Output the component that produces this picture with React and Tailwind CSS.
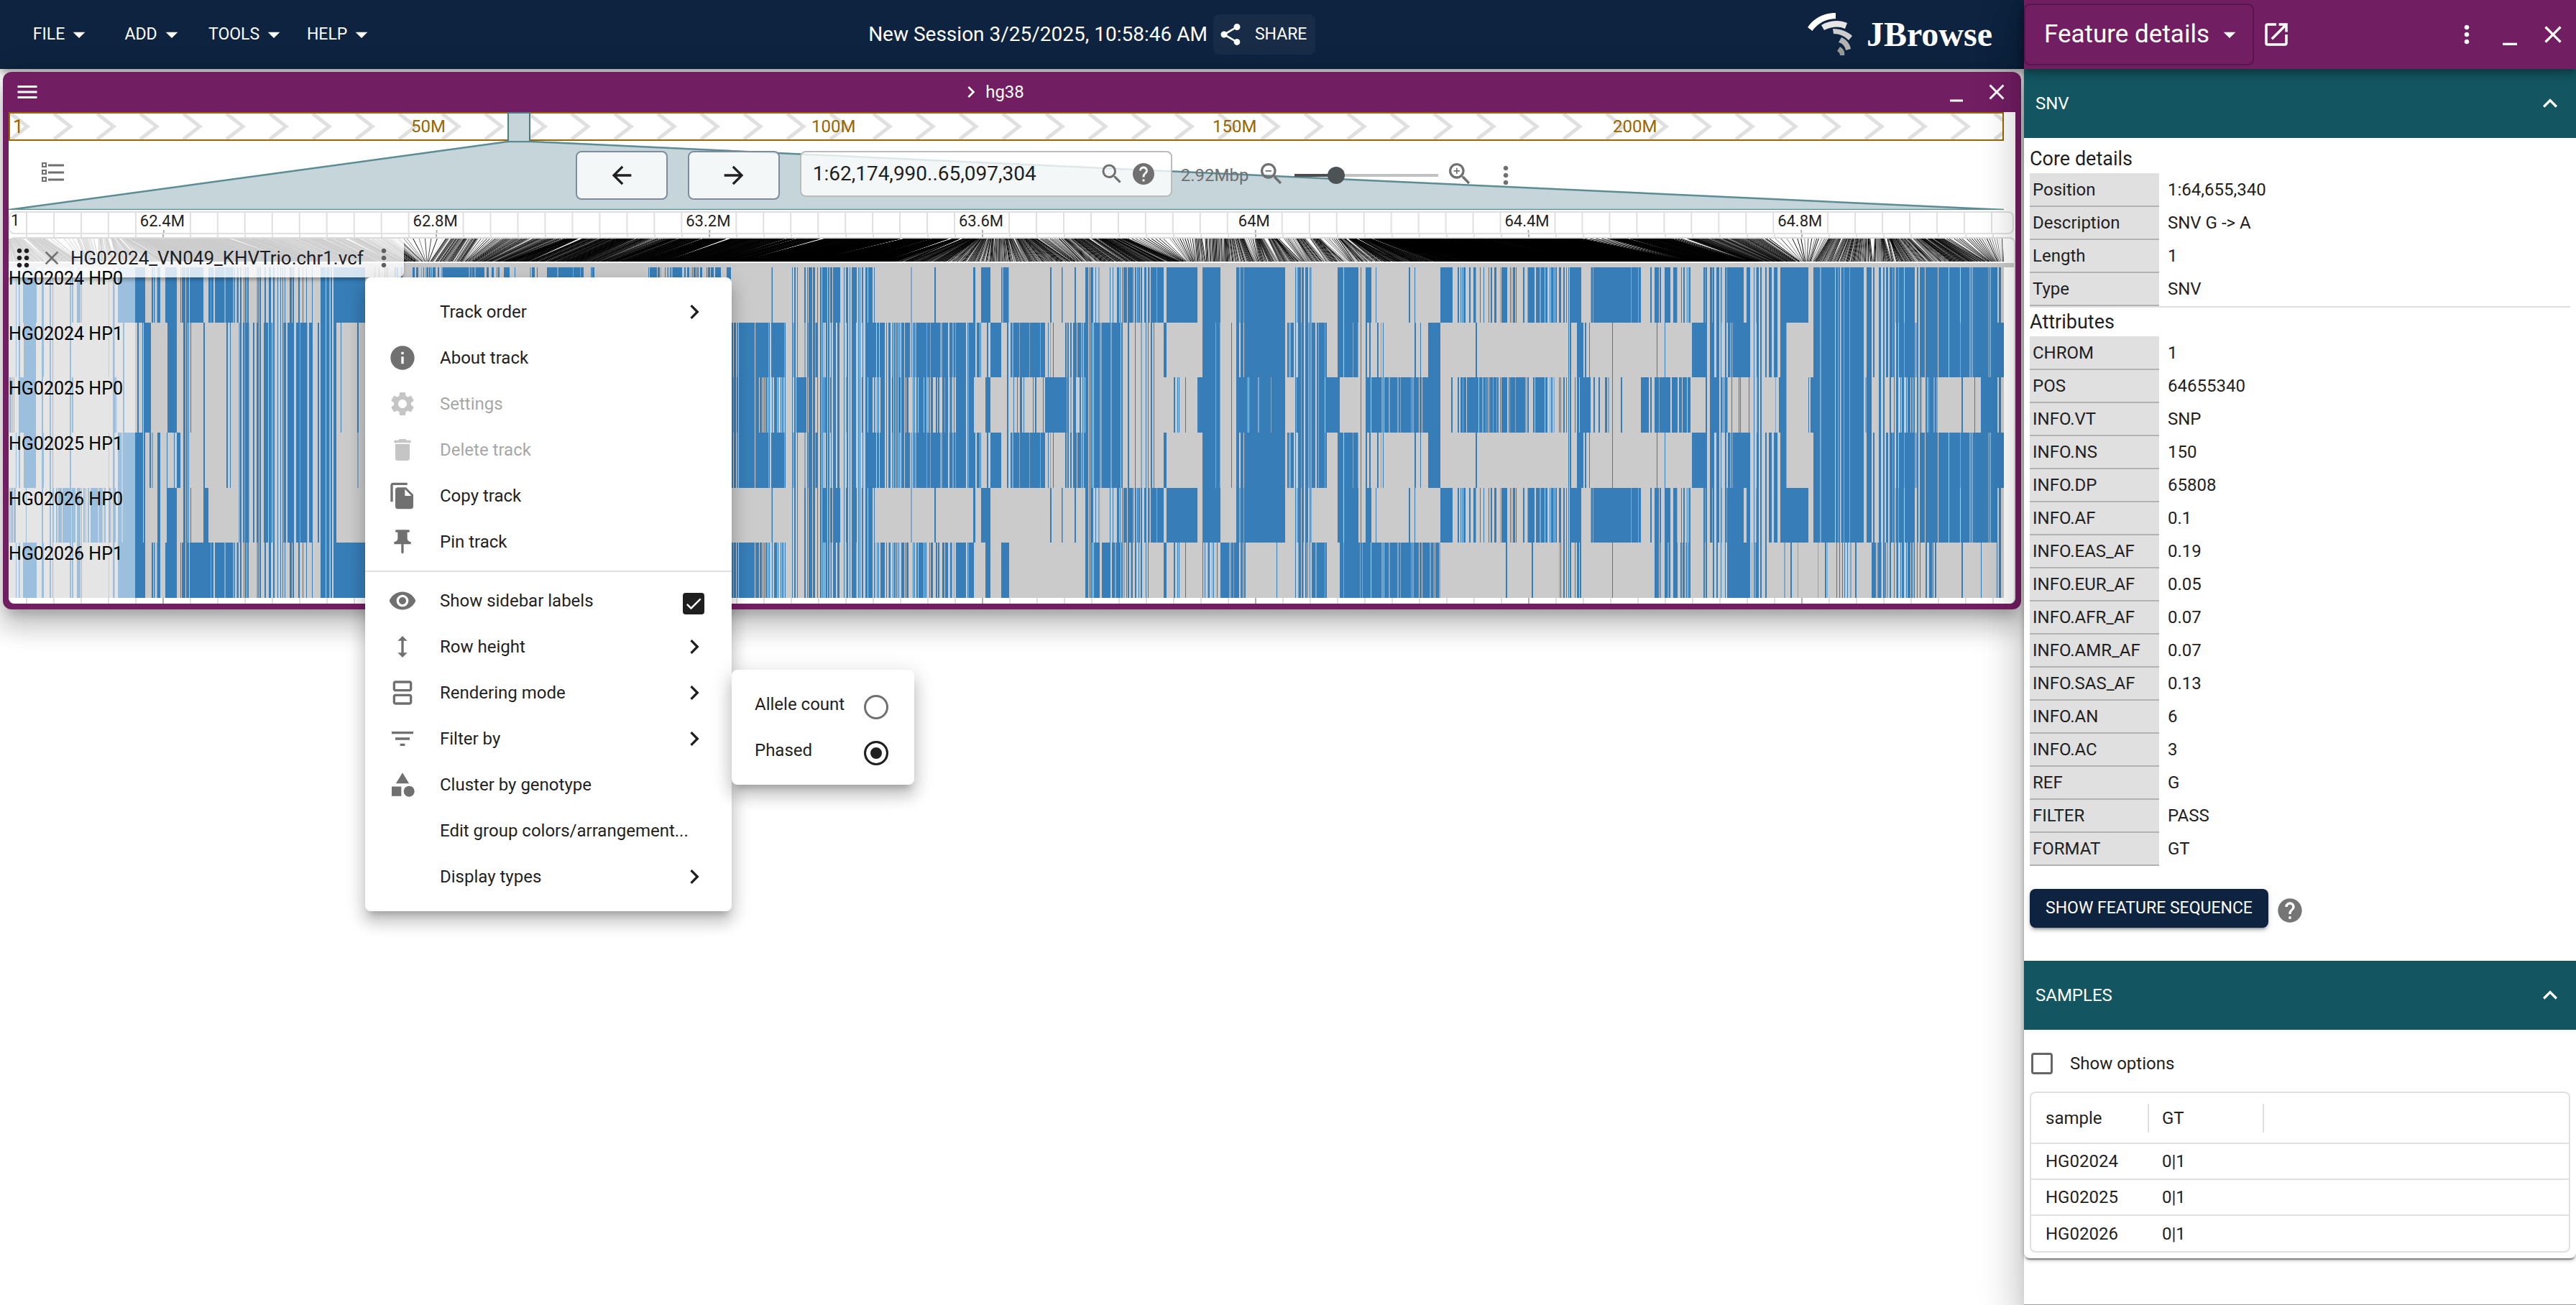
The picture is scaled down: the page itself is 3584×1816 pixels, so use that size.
import React from "react";
import {
  MdInfo, MdSettings, MdDelete, MdFileCopy, MdPushPin, MdVisibility, MdHeight, MdOutlineSplitscreen,
  MdFilterList, MdCategory, MdChevronRight, MdArrowBack, MdArrowForward, MdSearch, MdHelp, MdZoomOut,
  MdZoomIn, MdMoreVert, MdMinimize, MdClose, MdMenu, MdShare, MdArrowDropDown, MdOpenInNew,
  MdExpandLess, MdDragIndicator, MdCheck,
} from "react-icons/md";

/* ---------- genome data ---------- */

const ORIGIN = 12;
const SPAN = 2776;
const pct = (x) => ((x - ORIGIN) / SPAN) * 100 + "%";

// Each run is [end position, share of alternate alleles]
const LEFT_A = [[20,0],[27,.5],[32,.3],[51,1],[63,.5],[72,.3],[107,.13],[115,.6],[147,.08],[164,.3],[202,.98],[209,0],[230,.6],[246,1],[251,0],[264,.6],[283,1]];
const LEFT_B = [[21,0],[33,.5],[50,1],[63,.5],[73,.3],[147,.06],[164,.3]];
const MID_B = [[367,.7],[372,1],[390,.5],[400,.65],[419,.85],[434,.93],[450,.5],[468,.6]];
const MID_A = [[332,.96],[367,.5],[400,.3],[446,.22],[468,.6],[508,.98]];
const STRIP = [[566,.3],[614,.5],[673,.97],[710,.4],[737,.05],[748,.6],[761,0],[812,.95],[822,.1],[826,.8],[900,.03],[917,.85],[928,.2],[943,.7],[1016,.6]];
const RIGHT_A1 = [[1072,0],[1075,.7],[1099,0],[1140,.45],[1169,.6],[1204,.5],[1220,.4],[1239,0],[1241,.9],[1266,0],[1268,.9],[1300,0],[1302,.9],[1354,0],[1356,.7],[1365,0],[1378,.97],[1393,0]];
const RIGHT_A2 = [[1461,0],[1463,.9],[1477,0],[1479,.9],[1495,0],[1497,.6],[1510,0],[1521,.8],[1561,.17],[1601,.65],[1619,.93],[1623,0],[1666,.99],[1674,.4],[1698,.99],[1719,0],[1733,.8],[1788,.98],[1802,.15],[1825,.88],[1861,0],[1890,.92],[1901,.4],[1908,1],[1914,0],[1916,.7],[1960,0],[1962,.7],[2004,.02],[2019,1],[2039,.6],[2088,.35],[2096,.9],[2127,.25],[2133,1],[2148,.4],[2167,.8],[2200,.65],[2213,0],[2283,.97],[2294,0],[2354,.5],[2370,0],[2403,.5],[2421,1],[2477,.55],[2515,.99],[2523,.2],[2603,.92],[2624,.3],[2645,.85],[2697,.75],[2778,.96],[2788,.5]];
const RIGHT_B = [[1054,.95],[1092,.87],[1105,.5],[1124,.4],[1143,.75],[1204,.35],[1255,.72],[1303,.9],[1365,.93],[1378,.3],[1393,1],[1405,.15],[1453,.97],[1481,.1],[1510,.6],[1523,.5],[1562,.97],[1601,.3],[1619,.1],[1623,1],[1650,0],[1666,.2],[1674,.6],[1698,.95],[1720,.1],[1733,.7],[1788,.98],[1808,.7],[1846,.94],[1861,0],[1890,.87],[1908,.3],[1987,.05],[2004,1],[2053,0],[2055,.8],[2150,0],[2167,.3],[2194,.1],[2203,.9],[2213,.2],[2353,.02],[2368,1],[2385,.65],[2404,.4],[2433,.92],[2477,.5],[2486,.9],[2516,0],[2523,.2],[2603,.92],[2624,.35],[2697,.82],[2788,.97]];
const ROWS = [
  ["HG02024 HP0", [...LEFT_A, [290,0], ...MID_A, ...STRIP, ...RIGHT_A1, [1404,.97], ...RIGHT_A2]],
  ["HG02024 HP1", [...LEFT_B, [197,.07],[202,.5],[209,1],[229,0],[233,.3],[245,1],[250,0],[270,.4],[332,.06], ...MID_B, [1018,.04], ...RIGHT_B]],
  ["HG02025 HP0", [[16,1],[27,.3],[50,1],[73,.3],[157,.08],[164,.9],[197,.07],[202,.5],[209,1],[229,0],[233,.3],[245,1],[250,0],[270,.4],[332,.05], ...MID_B, [1018,.04],
    [1054,.97],[1108,.45],[1122,1],[1156,.5],[1226,.42],[1255,.75],[1332,.7],[1355,.92],[1370,.4],[1378,1],[1405,.05],[1453,.1],[1486,.94],[1510,.4],[1523,.5],[1562,.97],[1601,.3],[1666,.05],[1698,.93],[1720,.1],[1788,.96],[1802,.1],[1844,.93],[1864,1],[1888,0],[1901,.4],[1987,.93],[2004,1],[2019,0],[2033,.6],[2127,.85],[2133,0],[2167,.7],[2200,.4],[2213,1],[2239,.3],[2283,.07],[2294,1],[2303,.2],[2354,.8],[2373,0],[2404,.7],[2475,.2],[2486,.9],[2515,0],[2523,.4],[2603,.93],[2627,.25],[2697,.55],[2733,.15],[2756,.1],[2778,1],[2788,.5]]],
  ["HG02025 HP1", [...LEFT_B, [202,.97],[208,0],[233,.5],[245,.3],[250,1],[264,.4],[332,.06], ...MID_B, [1018,.02], ...RIGHT_B]],
  ["HG02026 HP0", [[21,.7],[52,.03],[72,.3],[104,.97],[128,.6],[147,.97],[164,.6],[202,.97],[212,0],[233,.5],[245,1],[250,0],[270,.4],[283,.2],[290,1],[332,0], ...MID_B, [1018,0], ...RIGHT_A1, [1404,0], ...RIGHT_A2]],
  ["HG02026 HP1", [...LEFT_A, ...MID_A, [1018,.5], [1054,.97],[1226,.45],[1332,.65],[1355,.95],[1370,.4],[1378,1],[1393,0],[1404,1],[1510,.02],[1523,.5],[1562,.92],[1601,.45],[1619,0],[1623,1],[1670,.05],[1698,.25],[1719,.97],[1733,.6],[1800,.03],[1825,.5],[1846,.97],[1863,0],[2004,.94],[2150,.02],[2203,.3],[2297,.03],[2324,.45],[2354,.6],[2370,0],[2403,.2],[2431,1],[2457,.6],[2603,.12],[2624,.8],[2697,.4],[2778,.05],[2788,.5]]],
];

function makeRandom(seed) {
  let s = seed;
  return () => {
    s = (s + 0x6d2b79f5) | 0;
    let t = Math.imul(s ^ (s >>> 15), 1 | s);
    t = (t + Math.imul(t ^ (t >>> 7), 61 | t)) ^ t;
    return ((t ^ (t >>> 14)) >>> 0) / 4294967296;
  };
}

// Variant columns are shared by every haplotype row
const COLUMNS = (() => {
  const rnd = makeRandom(7);
  const out = [];
  let x = ORIGIN + 1;
  while (x < 2788) {
    const w = rnd() < 0.7 ? 1 : 2;
    out.push([x, w, rnd()]);
    x += w;
  }
  return out;
})();

function stripes(runs) {
  let i = 0;
  let full = "";
  let half = "";
  for (const [x, w, n] of COLUMNS) {
    while (i < runs.length - 1 && x >= runs[i][0]) i++;
    const d = runs[i][1];
    const box = `M${x - ORIGIN} 0h${w}v10h-${w}z`;
    if (n < d * 0.9 || d >= 0.98) full += box;
    else if (n < d) half += box;
  }
  return { full, half };
}

// [matrix position, genome position]
const FAN = [[12,12],[40,16],[110,60],[120,110],[150,150],[300,200],[420,330],[560,500],[590,560],[598,616],[643,666],[650,690],[704,788],[722,795],[830,900],[840,925],[957,1048],[1100,1240],[1240,1330],[1380,1383],[1400,1398],[1490,1445],[1505,1475],[1640,1570],[1652,1625],[1664,1660],[1700,1698],[1745,1728],[1752,1745],[1810,1780],[1822,1805],[1875,1840],[1884,1862],[1960,1895],[2100,1960],[2350,2200],[2356,2240],[2430,2325],[2436,2345],[2504,2460],[2510,2500],[2516,2525],[2525,2545],[2620,2615],[2760,2705],[2772,2740],[2788,2787]];

const FAN_LINES = (() => {
  const rnd = makeRandom(23);
  const groups = { "#000": "", "#1c1c1c": "", "#4a4a4a": "", "#8a8a8a": "", "#d8d8d8": "" };
  const keys = Object.keys(groups);
  let i = 0;
  let clump = 0;
  for (let b = 12; b < 2788; b += 1.2) {
    while (i < FAN.length - 2 && b > FAN[i + 1][0]) i++;
    const [b0, t0] = FAN[i];
    const [b1, t1] = FAN[i + 1];
    if (rnd() < 0.08) clump = (rnd() - 0.5) * 7;
    const t = t0 + ((t1 - t0) * (b - b0)) / (b1 - b0) + clump;
    const lean = Math.abs(t - b);
    const r = rnd();
    const shade = lean > 85 ? (r < .85 ? 0 : r < .97 ? 1 : 2) : lean > 40 ? (r < .4 ? 0 : r < .7 ? 1 : r < .9 ? 2 : r < .98 ? 3 : 4) : (r < .15 ? 0 : r < .45 ? 1 : r < .75 ? 2 : r < .95 ? 3 : 4);
    groups[keys[shade]] += `M${(b - ORIGIN).toFixed(1)} 32L${(t - ORIGIN).toFixed(1)} 0`;
  }
  return groups;
})();

const MINOR = Array.from({ length: 73 }, (_, k) => 36 + 38 * k).filter((x) => (x - 226) % 380 !== 0);
const MAJOR = [["62.4M", 226], ["62.8M", 606], ["63.2M", 986], ["63.6M", 1366], ["64M", 1746], ["64.4M", 2126], ["64.8M", 2506]];
const OVERVIEW = [["50M", 572], ["100M", 1129], ["150M", 1687], ["200M", 2244]];

/* ---------- small parts ---------- */

function TopMenu({ label }) {
  return (
    <button className="flex h-16 min-w-32 items-center justify-center px-2.5 text-[23px] text-white">
      {label}
      <MdArrowDropDown className="size-10" />
    </button>
  );
}

function Logo() {
  return (
    <div className="flex items-center gap-5 pl-3">
      <svg viewBox="0 0 62 60" className="h-[60px] w-[62px]" aria-hidden="true">
        <path d="M0 20 C9 7 22 0 39 0 L39 8 C25 8 14 15 6.500 25 Z" fill="#fff" />
        <path d="M19 17 C30 10 44 9 55 14 L52 22 C43 18 33 19 23 24 Z" fill="#e6e6e6" />
        <path d="M35 22 C46 22 56 26 62 32 L57 38 C51 32 44 29 36 29 Z" fill="#cccccc" />
        <path d="M47 34 C54 37 59 43 60 50 L53 52 C52 46 48 42 43 41 Z" fill="#b3b3b3" />
        <path d="M45 47 C50 50 52 54 51 59 L45 59 C45 56 43 54 41 53 Z" fill="#999999" />
      </svg>
      <span className="font-[Liberation_Serif,serif] text-5xl font-bold text-white">JBrowse</span>
    </div>
  );
}

function TrackMenuItem({ icon: Icon, label, disabled, arrow }) {
  return (
    <li>
      <button disabled={disabled} className={disabled ? "flex h-16 w-full items-center px-8 text-left opacity-40" : "flex h-16 w-full items-center px-8 text-left"}>
        <span className="flex w-[72px] shrink-0">{Icon && <Icon className="size-10 text-[#707070]" />}</span>
        <span className="flex-1 whitespace-nowrap">{label}</span>
        {arrow && <MdChevronRight className="size-10" />}
      </button>
    </li>
  );
}

function Radio({ id, label, checked }) {
  return (
    <label htmlFor={id} className="flex h-16 items-center justify-between pr-9 pl-8">
      {label}
      <input id={id} type="radio" name="mode" defaultChecked={checked} className="mt-2 size-[34px] appearance-none rounded-full border-[3px] border-[#707070] checked:border-[#1f1f1f] checked:bg-[#1f1f1f] checked:shadow-[inset_0_0_0_6px_white]" />
    </label>
  );
}

function SectionHeader({ title }) {
  return (
    <button className="flex h-24 w-full items-center justify-between bg-[#135560] pr-4 pl-4 text-[24px] text-white">
      {title}
      <MdExpandLess className="size-10" />
    </button>
  );
}

function Fields({ rows }) {
  return (
    <table className="w-full text-left text-2xl">
      <tbody>
        {rows.map(([k, v]) => (
          <tr key={k} className="h-[46px]">
            <th scope="row" className="w-[180px] border-b-2 border-[#b2b2b2] bg-[#e0e0e0] p-0 pl-1 font-normal">{k}</th>
            <td className="p-0 pl-3">{v}</td>
          </tr>
        ))}
      </tbody>
    </table>
  );
}

const CORE = [["Position", "1:64,655,340"], ["Description", "SNV G -> A"], ["Length", "1"], ["Type", "SNV"]];
const ATTRS = [["CHROM", "1"], ["POS", "64655340"], ["INFO.VT", "SNP"], ["INFO.NS", "150"], ["INFO.DP", "65808"], ["INFO.AF", "0.1"], ["INFO.EAS_AF", "0.19"], ["INFO.EUR_AF", "0.05"], ["INFO.AFR_AF", "0.07"], ["INFO.AMR_AF", "0.07"], ["INFO.SAS_AF", "0.13"], ["INFO.AN", "6"], ["INFO.AC", "3"], ["REF", "G"], ["FILTER", "PASS"], ["FORMAT", "GT"]];

/* ---------- view panels ---------- */

function Overview() {
  return (
    <svg className="block h-10 w-full" aria-label="Chromosome overview">
      <defs>
        <pattern id="chevrons" x="2" width="60" height="40" patternUnits="userSpaceOnUse">
          <path d="M1 2 L24 20 L1 38" fill="none" stroke="#e0e0e0" strokeWidth="5" />
        </pattern>
      </defs>
      <rect width="100%" height="40" fill="#fff" />
      <rect width="100%" height="40" fill="url(#chevrons)" />
      <rect width="100%" height="2" fill="#996600" />
      <rect y="38" width="100%" height="2" fill="#996600" />
      <rect width="2" height="40" fill="#996600" />
      <rect x="100%" width="2" height="40" fill="#996600" transform="translate(-2 0)" />
      <rect x={pct(707)} width="1.1%" height="40" fill="#c6d5d9" />
      <rect x={pct(706)} width="2" height="40" fill="#4c7d85" />
      <rect x={pct(736)} width="2" height="40" fill="#4c7d85" />
      <rect x={pct(707)} width="1.1%" height="2" fill="#4c7d85" />
      <text x="6" y="29" fontSize="26" fill="#996600">1</text>
      {OVERVIEW.map(([t, x]) => (
        <text key={t} x={pct(x)} y="28" fontSize="24" fill="#996600">{t}</text>
      ))}
    </svg>
  );
}

function Toolbar() {
  return (
    <div className="relative h-24">
      <svg className="absolute inset-y-0 left-0 h-full w-[calc(100%-16px)]" viewBox="0 0 2776 96" preserveAspectRatio="none" aria-hidden="true">
        <path d="M695 0 L726 0 L2776 96 L0 96 Z" fill="#c6d5d9" />
        <path d="M0 96 L695 1 L726 1 L2776 96 Z" fill="none" stroke="#5c8d94" strokeWidth="2.5" />
      </svg>
      <div className="relative flex h-full items-center text-[#707070]">
        <button aria-label="Open track selector" className="flex w-[104px] justify-center pb-2 pl-5">
          <svg viewBox="0 0 32 28" className="h-7 w-8" fill="none" stroke="currentColor">
            {[3, 13, 23].map((y) => (
              <g key={y}>
                <rect x="1" y={y - 2} width="5" height="5" strokeWidth="2" />
                <path d={`M9 ${y + 1}H31`} strokeWidth="3" />
              </g>
            ))}
          </svg>
        </button>
        <div className="flex-1" />
        <button aria-label="Pan left" className="flex h-[68px] w-32 items-center justify-center rounded-lg border-2 border-[#7f8ca0] bg-white/80 text-[#1f1f1f]"><MdArrowBack className="size-10" /></button>
        <button aria-label="Pan right" className="ml-7 flex h-[68px] w-32 items-center justify-center rounded-lg border-2 border-[#7f8ca0] bg-white/80 text-[#1f1f1f]"><MdArrowForward className="size-10" /></button>
        <div className="mb-1 ml-7 flex h-16 w-[518px] items-center rounded-lg border-2 border-[#bbbbbb] bg-white/80 pr-5 pl-4">
          <input aria-label="Location" defaultValue="1:62,174,990..65,097,304" className="min-w-0 flex-1 bg-transparent text-[28px] text-[#1f1f1f]" />
          <button aria-label="Search"><MdSearch className="size-9" /></button>
          <button aria-label="Help" className="ml-2"><MdHelp className="size-9" /></button>
        </div>
        <span className="ml-3 text-2xl">2.92Mbp</span>
        <button aria-label="Zoom out" className="mb-1 ml-3"><MdZoomOut className="size-10" /></button>
        <input aria-label="Zoom" type="range" min="0" max="100" defaultValue="26" className="ml-3 h-6 w-[200px] appearance-none bg-[linear-gradient(to_right,#4d4d4d_28%,#c2c2c2_28%)] bg-[length:100%_4px] bg-center bg-no-repeat [&::-webkit-slider-thumb]:size-6 [&::-webkit-slider-thumb]:appearance-none [&::-webkit-slider-thumb]:rounded-full [&::-webkit-slider-thumb]:bg-[#4d5254]" />
        <button aria-label="Zoom in" className="mb-1 ml-2.5"><MdZoomIn className="size-10" /></button>
        <button aria-label="View menu" className="mr-1 ml-6"><MdMoreVert className="size-10" /></button>
        <div className="flex-1" />
      </div>
    </div>
  );
}

function Ruler() {
  return (
    <div className="mr-0.5 mt-0.5 h-8 overflow-hidden rounded-lg border-2 border-[#e0e0e0] bg-white">
      <svg className="-my-0.5 block h-8 w-[calc(100%-12px)] overflow-visible" aria-label="Scale">
        {MINOR.map((x) => <rect key={x} x={pct(x - 2)} width="2" height="32" fill="#e0e0e0" />)}
        {MAJOR.map(([t, x]) => (
          <g key={t}>
            <rect x={pct(x - 1)} y="26" width="2" height="6" fill="#b0b0b0" />
            <text x={pct(x - 2)} y="21" fontSize="22" textAnchor="middle" fill="#1f1f1f">{t}</text>
          </g>
        ))}
        <text x="1" y="20" fontSize="22" fill="#1f1f1f">1</text>
      </svg>
    </div>
  );
}

function Gridlines({ className }) {
  return (
    <svg className={className} aria-hidden="true">
      {MINOR.map((x) => <rect key={x} x={pct(x)} width="2" height="100%" fill="#e0e0e0" />)}
      {MAJOR.map(([t, x]) => <rect key={t} x={pct(x)} width="2" height="100%" fill="#b0b0b0" />)}
    </svg>
  );
}

function Track() {
  return (
    <div className="relative">
      <Gridlines className="block h-1 w-[calc(100%-16px)]" />
      <div className="relative rounded-lg border-2 border-b-0 border-l-0 border-[#dcdcdc] bg-white">
        <svg className="block h-8 w-[calc(100%-14px)]" viewBox="0 0 2776 32" preserveAspectRatio="none" aria-label="Variant positions">
          {Object.entries(FAN_LINES).reverse().map(([c, d]) => <path key={c} d={d} stroke={c} strokeWidth="1" fill="none" />)}
        </svg>
        <div className="mt-0.5 h-1.5 bg-[#c9c9c9]" />
        <div className="relative grid h-[460px] w-[calc(100%-14px)] grid-rows-6">
          {ROWS.map(([name, runs]) => {
            const { full, half } = stripes(runs);
            return (
              <svg key={name} className="block h-full min-h-0 w-full bg-[#cbcbcb]" viewBox="0 0 2776 10" preserveAspectRatio="none" aria-label={name} shapeRendering="crispEdges">
                <path d={half} fill="#7fa7c9" />
                <path d={full} fill="#377eb8" />
              </svg>
            );
          })}
          <div className="absolute inset-y-0 left-0 w-44 bg-white/50" />
        </div>
        <Gridlines className="block h-2 w-[calc(100%-14px)]" />
        <div className="absolute top-0 left-0 flex h-[54px] w-[550px] items-center rounded-br-lg bg-white/80 shadow-[0_4px_4px_rgba(0,0,0,0.25)]">
          <MdDragIndicator className="size-10 text-[#1f1f1f]" />
          <button aria-label="Close track" className="ml-1"><MdClose className="size-8 text-[#707070]" /></button>
          <span className="ml-2.5 text-[26px]">HG02024_VN049_KHVTrio.chr1.vcf</span>
          <button aria-label="Track menu" className="ml-2"><MdMoreVert className="size-10 text-[#606060]" /></button>
        </div>
        <div className="absolute top-10 left-0 grid h-[460px] grid-rows-6 text-[25px] text-black">
          {ROWS.map(([name]) => <div key={name} className="leading-8">{name}</div>)}
        </div>
      </div>
    </div>
  );
}

function TrackMenu() {
  return (
    <ul className="absolute top-[386px] left-[508px] w-[510px] rounded-lg bg-white py-4 text-2xl shadow-[0_10px_10px_-6px_rgba(0,0,0,0.2),0_16px_20px_2px_rgba(0,0,0,0.14),0_6px_28px_4px_rgba(0,0,0,0.12)]">
      <TrackMenuItem label="Track order" arrow />
      <TrackMenuItem icon={MdInfo} label="About track" />
      <TrackMenuItem icon={MdSettings} label="Settings" disabled />
      <TrackMenuItem icon={MdDelete} label="Delete track" disabled />
      <TrackMenuItem icon={MdFileCopy} label="Copy track" />
      <TrackMenuItem icon={MdPushPin} label="Pin track" />
      <li className="my-2 h-0.5 bg-[#e0e0e0]" />
      <li>
        <label htmlFor="sidebar" className="flex h-16 items-center px-8">
          <span className="flex w-[72px]"><MdVisibility className="size-10 text-[#707070]" /></span>
          <span className="flex-1">Show sidebar labels</span>
          <span className="mt-2 mr-1.5 grid size-[30px] place-items-center">
            <input id="sidebar" type="checkbox" defaultChecked className="col-start-1 row-start-1 size-[30px] appearance-none rounded border-2 border-[#1f1f1f] checked:bg-[#1f1f1f]" />
            <MdCheck className="pointer-events-none col-start-1 row-start-1 size-7 text-white" />
          </span>
        </label>
      </li>
      <TrackMenuItem icon={MdHeight} label="Row height" arrow />
      <TrackMenuItem icon={MdOutlineSplitscreen} label="Rendering mode" arrow />
      <TrackMenuItem icon={MdFilterList} label="Filter by" arrow />
      <TrackMenuItem icon={MdCategory} label="Cluster by genotype" />
      <TrackMenuItem label="Edit group colors/arrangement..." />
      <TrackMenuItem label="Display types" arrow />
    </ul>
  );
}

function Drawer() {
  return (
    <aside className="relative flex w-[768px] shrink-0 flex-col border-b border-[#a0a0a0] bg-white shadow-[0_16px_20px_-10px_rgba(0,0,0,0.2),0_32px_48px_4px_rgba(0,0,0,0.14),0_12px_60px_10px_rgba(0,0,0,0.12)]">
      <header className="relative flex h-24 items-center bg-[#721e63] pr-3 text-white shadow-[0_4px_8px_-2px_rgba(0,0,0,0.2),0_8px_10px_0_rgba(0,0,0,0.14),0_2px_20px_0_rgba(0,0,0,0.12)]">
        <button className="flex h-[86px] w-80 items-center justify-between rounded-lg border-2 border-[#58174c] pr-3 pl-[26px] text-[35px]">
          Feature details
          <MdArrowDropDown className="size-10" />
        </button>
        <button aria-label="Open in dialog" className="ml-2.5"><MdOpenInNew className="size-[42px]" /></button>
        <div className="flex-1" />
        <button aria-label="Drawer menu" className="mr-5"><MdMoreVert className="size-10" /></button>
        <button aria-label="Minimize drawer" className="mr-5"><MdMinimize className="size-10" /></button>
        <button aria-label="Close drawer"><MdClose className="size-10" /></button>
      </header>
      <div className="rounded-b-lg shadow-[0_4px_2px_-2px_rgba(0,0,0,0.4),0_2px_6px_rgba(0,0,0,0.3)]">
        <SectionHeader title="SNV" />
        <div className="px-2 pt-2 pb-[46px]">
          <h2 className="h-[41px] text-[27px] leading-[42px]">Core details</h2>
          <Fields rows={CORE} />
          <hr className="h-0.5 border-0 bg-[#e0e0e0]" />
          <h2 className="h-10 text-[27px] leading-10">Attributes</h2>
          <Fields rows={ATTRS} />
          <div className="mt-8 flex items-center">
            <button className="h-[54px] w-[332px] rounded-lg bg-[#0d233f] text-[23px] text-white shadow-[0_6px_2px_-4px_rgba(0,0,0,0.2),0_4px_4px_rgba(0,0,0,0.14),0_2px_10px_rgba(0,0,0,0.12)]">SHOW FEATURE SEQUENCE</button>
            <button aria-label="Sequence help" className="mt-1.5 ml-2.5"><MdHelp className="size-10 text-[#757575]" /></button>
          </div>
        </div>
        <SectionHeader title="SAMPLES" />
        <div className="p-2">
          <label htmlFor="options" className="flex h-[78px] items-center gap-6 text-2xl">
            <input id="options" type="checkbox" className="ml-0.5 size-[30px] appearance-none rounded border-[3px] border-[#666666]" />
            Show options
          </label>
          <div className="overflow-hidden rounded-lg border-2 border-[#e0e0e0]">
            <table className="w-full text-left text-2xl">
              <thead>
                <tr className="h-[70px]">
                  <th className="w-[164px] p-0 font-normal"><div className="flex h-10 items-center border-r-2 border-[#e0e0e0] pl-5">sample</div></th>
                  <th className="w-[160px] p-0 font-normal"><div className="flex h-10 items-center border-r-2 border-[#e0e0e0] pl-[18px]">GT</div></th>
                  <th />
                </tr>
              </thead>
              <tbody>
                {["HG02024", "HG02025", "HG02026"].map((s) => (
                  <tr key={s} className="h-[50px] border-t-2 border-[#e0e0e0]">
                    <td className="p-0 pl-5">{s}</td>
                    <td className="p-0 pl-[18px]">0|1</td>
                    <td />
                  </tr>
                ))}
              </tbody>
            </table>
          </div>
        </div>
      </div>
    </aside>
  );
}

export default function App() {
  return (
    <div className="flex min-h-screen overflow-hidden bg-white font-[Roboto,sans-serif] text-[#1f1f1f]">
      <main className="relative min-w-0 flex-1">
        <header className="relative flex h-24 items-center bg-[#0d233f] pr-11 pl-6 text-white shadow-[0_4px_8px_-2px_rgba(0,0,0,0.2),0_8px_10px_0_rgba(0,0,0,0.14),0_2px_20px_0_rgba(0,0,0,0.12)]">
          <TopMenu label="FILE" />
          <TopMenu label="ADD" />
          <TopMenu label="TOOLS" />
          <TopMenu label="HELP" />
          <div className="flex-1" />
          <span className="text-[28px]">New Session 3/25/2025, 10:58:46 AM</span>
          <button className="mr-1 ml-2 flex h-14 w-[142px] items-center gap-4 rounded-lg bg-[#182c47] pl-1.5 text-[23px]">
            <MdShare className="size-9" />
            SHARE
          </button>
          <div className="flex-1" />
          <Logo />
        </header>
        <section className="relative mx-1 mt-1 rounded-xl bg-[#721e63] px-2 pb-2 shadow-[0_14px_16px_-8px_rgba(0,0,0,0.2),0_24px_34px_4px_rgba(0,0,0,0.14),0_10px_44px_8px_rgba(0,0,0,0.12)]">
          <div className="flex h-14 items-center pr-2 pl-2 text-white">
            <button aria-label="View menu"><MdMenu className="size-9" /></button>
            <div className="flex-1" />
            <MdChevronRight className="size-8" />
            <span className="ml-1 text-2xl">hg38</span>
            <div className="flex-1" />
            <button aria-label="Minimize view" className="mr-5"><MdMinimize className="size-9" /></button>
            <button aria-label="Close view"><MdClose className="size-9" /></button>
          </div>
          <div className="overflow-hidden rounded-b-lg bg-white">
            <div className="pr-4"><Overview /></div>
            <Toolbar />
            <Ruler />
            <Track />
          </div>
        </section>
        <TrackMenu />
        <div className="absolute top-[932px] left-[1018px] w-[254px] rounded-lg bg-white py-4 text-2xl shadow-[0_10px_10px_-6px_rgba(0,0,0,0.2),0_16px_20px_2px_rgba(0,0,0,0.14),0_6px_28px_4px_rgba(0,0,0,0.12)]">
          <Radio id="allele" label="Allele count" />
          <Radio id="phased" label="Phased" checked />
        </div>
      </main>
      <Drawer />
    </div>
  );
}
